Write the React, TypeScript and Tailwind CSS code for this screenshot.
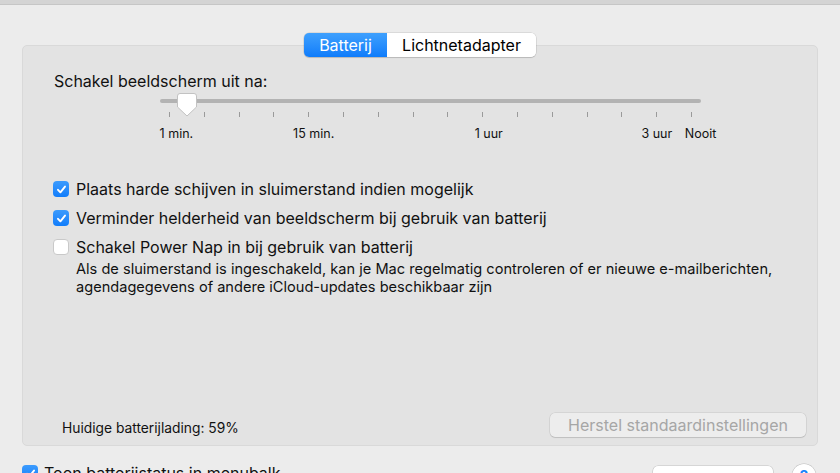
import React from "react";

const font = { fontFamily: '"Inter", "Liberation Sans", sans-serif' };

function Check({ checked }: { checked: boolean }) {
  if (checked) {
    return (
      <div className="w-[16px] h-[16px] rounded-[4px] bg-gradient-to-b from-[#3b9bfd] to-[#0f7dfb] flex items-center justify-center shrink-0">
        <svg width="11" height="11" viewBox="0 0 11 11">
          <path d="M2 5.8 L4.4 8.3 L9 2.6" fill="none" stroke="white" strokeWidth="1.9" strokeLinecap="round" strokeLinejoin="round" />
        </svg>
      </div>
    );
  }
  return <div className="w-[16px] h-[16px] rounded-[4px] bg-white border border-[#c9c9c9] shrink-0" />;
}

export default function App() {
  const ticks = Array.from({ length: 16 });
  return (
    <div className="w-[840px] h-[473px] overflow-hidden bg-[#ececec] text-[#111]" style={font}>
      <div className="h-[5px] bg-[#d4d4d4] border-b border-[#c6c6c6]" />
      <div className="mt-[28px] flex justify-center relative z-10">
        <div className="flex h-[24px] rounded-[5px] shadow-[0_0_0_0.5px_rgba(0,0,0,0.15),0_1px_1px_rgba(0,0,0,0.12)]">
          <div className="w-[83px] rounded-l-[5px] bg-gradient-to-b from-[#3ea0fd] to-[#0d7cfb] text-white text-[16px] flex items-center justify-center">
            Batterij
          </div>
          <div className="w-[149px] rounded-r-[5px] bg-white text-black text-[16px] flex items-center justify-center">
            Lichtnetadapter
          </div>
        </div>
      </div>
      <div className="-mt-[12px] mx-[22px] h-[401px] bg-[#e3e3e3] border border-[#d9d9d9] rounded-[5px] flex flex-col">
        <div className="pl-[31px] pt-[26px] text-[16px] leading-[18px]">Schakel beeldscherm uit na:</div>
        <div className="ml-[129px] w-[557px] mt-[9px]">
          <div className="relative ml-[8px] w-[541px] h-[4px] rounded-full bg-[#b3b3b3]">
            <svg className="absolute left-[17px] top-[-6px]" width="20" height="24" viewBox="0 0 20 24">
              <path d="M3 0.5 H17 Q19.5 0.5 19.5 3 V14 L10 23 L0.5 14 V3 Q0.5 0.5 3 0.5 Z" fill="white" stroke="#c2c2c2" strokeWidth="1" />
            </svg>
          </div>
          <div className="grid grid-cols-16 mt-[9px] h-[5px]">
            {ticks.map((_, i) => (
              <div key={i} className="flex justify-center">
                <div className="w-[1px] h-[5px] bg-[#9a9a9a]" />
              </div>
            ))}
          </div>
          <div className="grid grid-cols-16 mt-[9px] text-[12.5px] leading-[16px] whitespace-nowrap">
            <div className="col-start-1 flex justify-center translate-x-[7px]">1 min.</div>
            <div className="col-start-5 flex justify-center translate-x-[5px]">15 min.</div>
            <div className="col-start-10 flex justify-center translate-x-[6px]">1 uur</div>
            <div className="col-start-15 flex justify-center">3 uur</div>
            <div className="col-start-16 flex justify-center translate-x-[9px]">Nooit</div>
          </div>
        </div>
        <div className="pl-[30px] mt-[36px] flex flex-col gap-[7px] text-[16px]">
          <div className="h-[22px] flex items-center gap-[7px]">
            <Check checked />
            <span>Plaats harde schijven in sluimerstand indien mogelijk</span>
          </div>
          <div className="h-[22px] flex items-center gap-[7px]">
            <Check checked />
            <span>Verminder helderheid van beeldscherm bij gebruik van batterij</span>
          </div>
          <div className="h-[22px] flex items-center gap-[7px]">
            <Check checked={false} />
            <span>Schakel Power Nap in bij gebruik van batterij</span>
          </div>
        </div>
        <div className="pl-[53px] mt-[2px] text-[14.6px] leading-[18px]">
          <div>Als de sluimerstand is ingeschakeld, kan je Mac regelmatig controleren of er nieuwe e-mailberichten,</div>
          <div>agendagegevens of andere iCloud-updates beschikbaar zijn</div>
        </div>
        <div className="mt-auto pl-[39px] pr-[11px] pb-[8px] flex items-end justify-between">
          <div className="text-[13.8px] leading-[18px]">Huidige batterijlading: 59%</div>
          <div className="w-[256px] h-[24px] rounded-[5px] bg-[#ededed] shadow-[0_0_0_0.5px_rgba(0,0,0,0.12),0_1px_1px_rgba(0,0,0,0.1)] text-[16px] text-[#a6a6a6] flex items-center justify-center">
            Herstel standaardinstellingen
          </div>
        </div>
      </div>
      <div className="mt-[18px] pl-[22px] pr-[24px] flex items-start">
        <div className="mt-[1px]"><Check checked /></div>
        <span className="ml-[6px] text-[16px] leading-[18px]">Toon batterijstatus in menubalk</span>
        <div className="ml-auto mt-[2px] w-[120px] h-[22px] rounded-[5px] bg-white shadow-[0_0_0_0.5px_rgba(0,0,0,0.18),0_1px_1px_rgba(0,0,0,0.1)]" />
        <div className="ml-[19px] w-[24px] h-[24px] rounded-full bg-white shadow-[0_0_0_0.5px_rgba(0,0,0,0.2),0_1px_1px_rgba(0,0,0,0.1)] flex items-center justify-center text-[#1a84fb] font-bold text-[15px]">
          ?
        </div>
      </div>
    </div>
  );
}
